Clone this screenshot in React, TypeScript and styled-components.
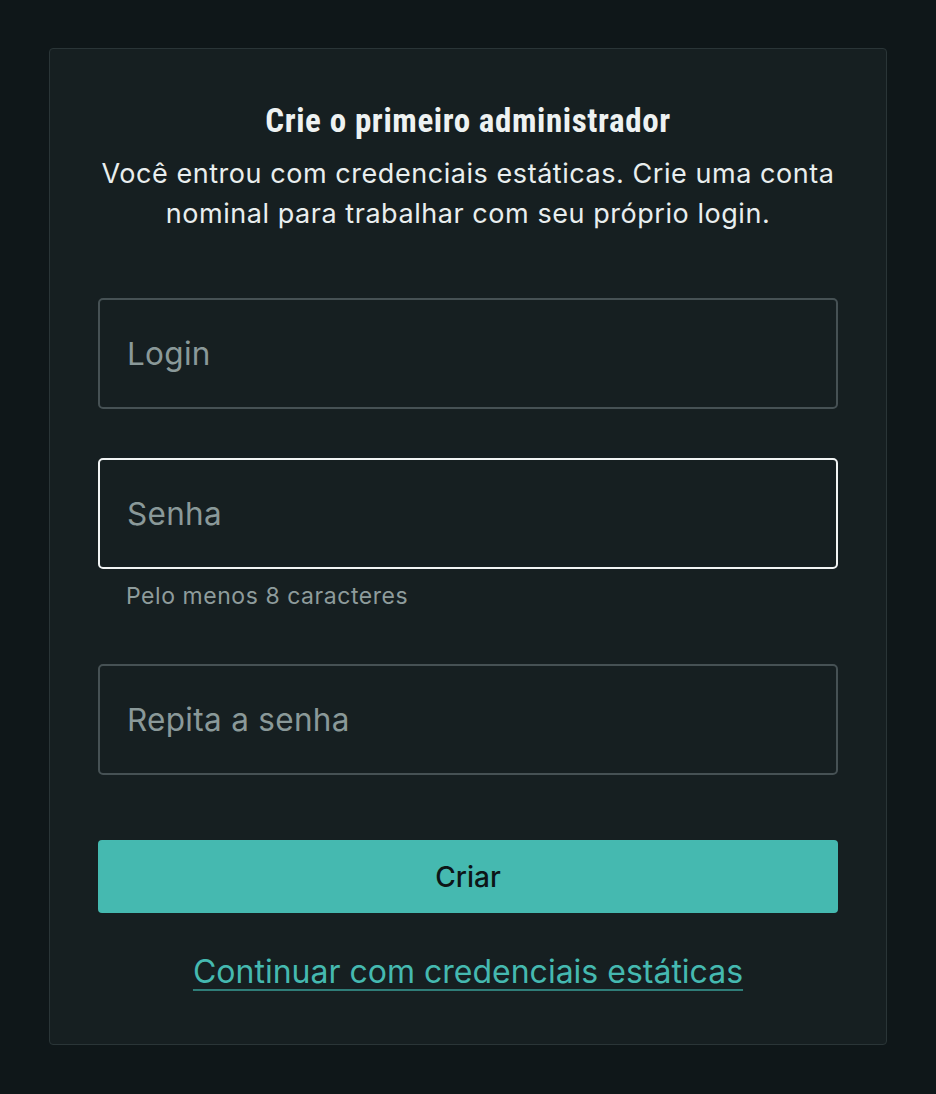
import styled, { createGlobalStyle } from 'styled-components'

const GlobalStyle = createGlobalStyle`
	html, body {
		margin: 0;
		padding: 0;
		background: #0f1719;
	}
	body {
		font-family: Inter, 'Noto Sans', sans-serif;
		color: #e9eeee;
	}
`

const Page = styled.div`
	min-height: 1094px;
	padding: 48px 49px;
	box-sizing: border-box;
	background: #0f1719;
`

const Card = styled.div`
	background: #161f21;
	border: 1px solid #2a3537;
	border-radius: 4px;
	padding: 53px 48px 54px;
	display: flex;
	flex-direction: column;
	align-items: center;
`

const Title = styled.h1`
	margin: 0;
	font-family: 'Liberation Sans Narrow', 'Roboto Condensed', Roboto, sans-serif;
	font-weight: 700;
	font-size: 33px;
	line-height: 38px;
	color: #eef2f2;
	letter-spacing: 0.6px;
`

const Lead = styled.p`
	margin: 14px 0 0;
	font-size: 27px;
	line-height: 40px;
	text-align: center;
	letter-spacing: 0.55px;
	color: #e9eeee;
`

const Form = styled.form`
	width: 100%;
	margin-top: 64px;
	display: flex;
	flex-direction: column;
`

const Field = styled.div<{ $gap?: number }>`
	margin-bottom: ${p => p.$gap ?? 49}px;
	display: flex;
	flex-direction: column;
`

const Input = styled.input<{ $focused?: boolean }>`
	box-sizing: border-box;
	width: 100%;
	height: 111px;
	padding: 0 27px;
	background: #161f21;
	border: 2px solid ${p => (p.$focused ? '#f1f4f4' : '#465154')};
	border-radius: 5px;
	font-family: Inter, 'Noto Sans', sans-serif;
	font-size: 31.5px;
	letter-spacing: 0.3px;
	color: #e9eeee;
	outline: none;

	&::placeholder {
		color: #8a9999;
	}
`

const Hint = styled.span`
	margin: 14px 0 0 28px;
	font-size: 23px;
	line-height: 26px;
	color: #8e9c9c;
	letter-spacing: 0.55px;
`

const Button = styled.button`
	margin-top: 16px;
	height: 73px;
	border: none;
	border-radius: 4px;
	background: #45b9b0;
	color: #0d1517;
	font-family: Inter, 'Noto Sans', sans-serif;
	font-size: 28px;
	font-weight: 500;
	cursor: pointer;
`

const Link = styled.a`
	margin-top: 41px;
	font-size: 32px;
	line-height: 36px;
	color: #45b9b0;
	text-decoration: underline;
	text-decoration-color: #2f7d78;
	text-underline-offset: 6px;
	text-decoration-thickness: 2px;
`

export default function App() {
	return (
		<>
			<GlobalStyle />
			<Page>
				<Card>
					<Title>Crie o primeiro administrador</Title>
					<Lead>
						Você entrou com credenciais estáticas. Crie uma conta
						<br />
						nominal para trabalhar com seu próprio login.
					</Lead>
					<Form onSubmit={e => e.preventDefault()}>
						<Field>
							<Input placeholder="Login" />
						</Field>
						<Field $gap={55}>
							<Input placeholder="Senha" type="password" $focused />
							<Hint>Pelo menos 8 caracteres</Hint>
						</Field>
						<Field $gap={49}>
							<Input placeholder="Repita a senha" type="password" />
						</Field>
						<Button type="submit">Criar</Button>
					</Form>
					<Link href="#">Continuar com credenciais estáticas</Link>
				</Card>
			</Page>
		</>
	)
}
